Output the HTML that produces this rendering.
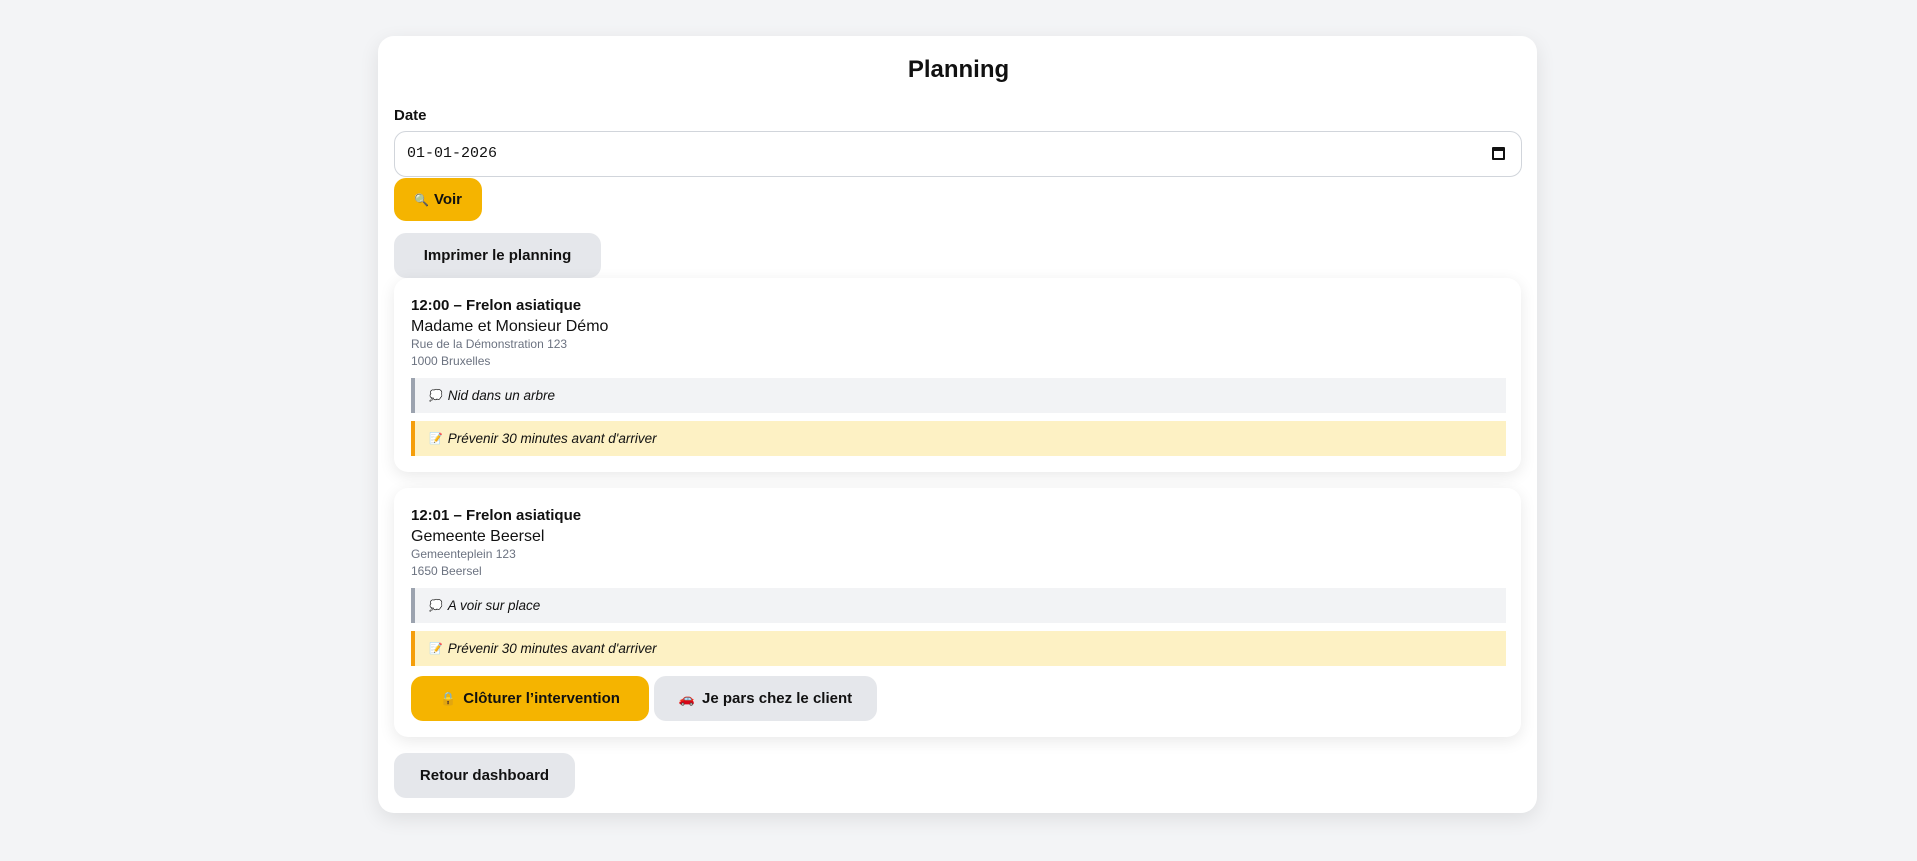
<!DOCTYPE html>
<html><head><meta charset="utf-8"><style>
*{box-sizing:border-box;margin:0;padding:0}
body{width:1917px;height:861px;background:#f3f4f6;font-family:"Liberation Sans","Noto Sans CJK JP",sans-serif;color:#111;position:relative;overflow:hidden}
.c{position:absolute;left:378px;top:36px;width:1159px;height:777px;background:#fff;border-radius:16px;box-shadow:0 6px 20px rgba(0,0,0,.09)}
.a{position:absolute}
h1{position:absolute;left:0;right:0;top:56px;text-align:center;font-size:24px;font-weight:bold}
.btn{position:absolute;border-radius:12px;font-weight:bold;font-size:15px;display:flex;align-items:center;justify-content:center;white-space:nowrap}
.y{background:#f5b400}.g{background:#e5e7eb}
.card{position:absolute;left:394px;width:1127px;background:#fff;border-radius:14px;box-shadow:0 4px 16px rgba(0,0,0,.09)}
.t{position:absolute;left:17px;font-weight:bold;font-size:15px}
.n{position:absolute;left:17px;font-size:16px}
.s{position:absolute;left:17px;font-size:12px;color:#6b7280}
.note{position:absolute;left:17px;right:15px;height:35px;font-style:italic;font-size:13.5px;display:flex;align-items:center;padding-left:14px}
.n1{background:#f2f3f5;border-left:4px solid #9ca3af}
.n2{background:#fdf1c4;border-left:4px solid #f59e0b}
.ic{font-style:normal;font-size:11px;margin-right:5px}
</style></head><body>
<div class="c"></div>
<h1>Planning</h1>
<div class="a" style="left:394px;top:107px;font-weight:bold;font-size:15px">Date</div>
<div class="a" style="left:394px;top:131px;width:1128px;height:46px;border:1px solid #d1d5db;border-radius:12px;font-family:'Liberation Mono',monospace;font-size:15px;padding:13px 0 0 12px">01-01-2026
<div class="a" style="right:16px;top:15px;width:13px;height:13px;border:2px solid #111;border-top-width:4px;border-radius:1px"></div></div>
<div class="btn y" style="left:394px;top:178px;width:88px;height:43px"><span style="font-size:12px;margin-right:5px">🔍</span>Voir</div>
<div class="btn g" style="left:394px;top:233px;width:207px;height:45px">Imprimer le planning</div>

<div class="card" style="top:278px;height:194px">
<div class="t" style="top:19px">12:00 – Frelon asiatique</div>
<div class="n" style="top:40px">Madame et Monsieur Démo</div>
<div class="s" style="top:59px">Rue de la Démonstration 123</div>
<div class="s" style="top:76px">1000 Bruxelles</div>
<div class="note n1" style="top:100px"><span class="ic">💭</span>Nid dans un arbre</div>
<div class="note n2" style="top:143px"><span class="ic">📝</span>Prévenir 30 minutes avant d'arriver</div>
</div>

<div class="card" style="top:488px;height:249px">
<div class="t" style="top:19px">12:01 – Frelon asiatique</div>
<div class="n" style="top:40px">Gemeente Beersel</div>
<div class="s" style="top:59px">Gemeenteplein 123</div>
<div class="s" style="top:76px">1650 Beersel</div>
<div class="note n1" style="top:100px"><span class="ic">💭</span>A voir sur place</div>
<div class="note n2" style="top:143px"><span class="ic">📝</span>Prévenir 30 minutes avant d'arriver</div>
<div class="btn y" style="left:17px;top:188px;width:238px;height:45px"><span style="font-size:13px;margin-right:7px">🔒</span>Clôturer l’intervention</div>
<div class="btn g" style="left:260px;top:188px;width:223px;height:45px"><span style="font-size:13px;margin-right:7px">🚗</span>Je pars chez le client</div>
</div>

<div class="btn g" style="left:394px;top:753px;width:181px;height:45px">Retour dashboard</div>
</body></html>
